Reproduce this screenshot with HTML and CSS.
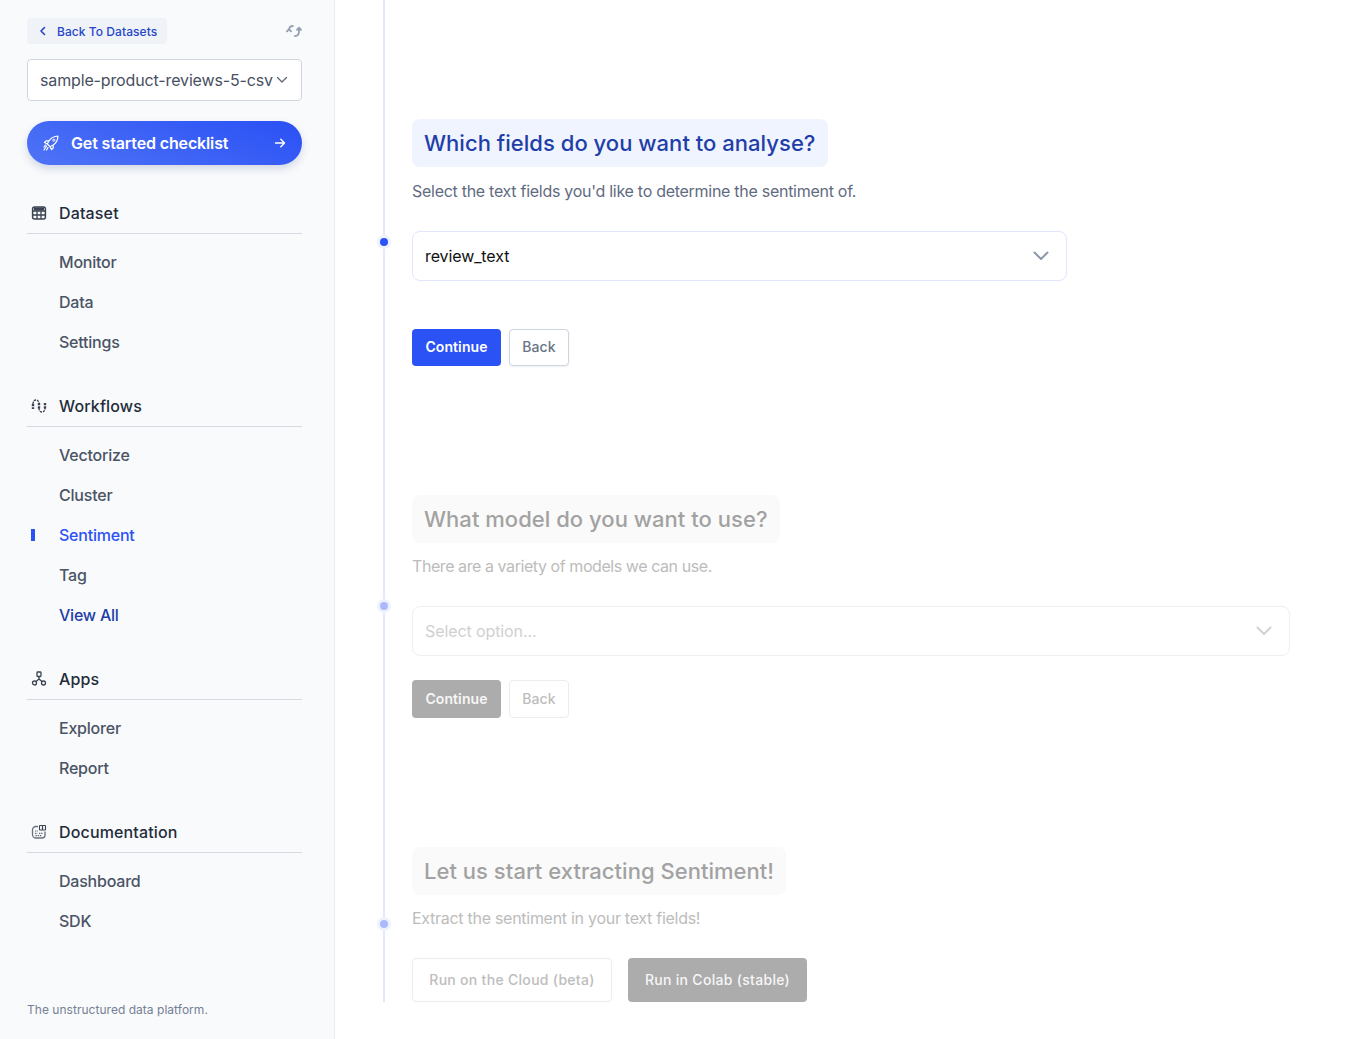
FILE: index.html
```html
<!DOCTYPE html>
<html lang="en">
<head>
<meta charset="utf-8">
<title>Sentiment</title>
<link rel="stylesheet" href="styles.css">
</head>
<body>
<div class="app">
  <aside class="sidebar">
    <div class="top-row">
      <a class="back-link">
        <svg class="back-icon" viewBox="0 0 12 12" fill="none"><path d="M7.500 2.500 4 6l3.500 3.500" stroke="currentColor" stroke-width="1.600" stroke-linecap="round" stroke-linejoin="round"/></svg>
        <span>Back To Datasets</span>
      </a>
      <svg class="sync-icon" viewBox="0 0 16 14" fill="none"><path d="M1 7.300 3 5.200l2 2.100M3 6c.2-2.400 1.600-4 3.800-4" stroke="currentColor" stroke-width="1.900" stroke-linecap="round" stroke-linejoin="round"/><path d="M15 5.800 13 3.700l-2 2.100M13 4.700v3c-.2 2.600-1.700 4.300-4 4.300" stroke="currentColor" stroke-width="1.900" stroke-linecap="round" stroke-linejoin="round"/></svg>
    </div>
    <div class="dataset-select">
      <span>sample-product-reviews-5-csv</span>
      <svg class="small-chevron" viewBox="0 0 12 8" fill="none"><path d="M1.500 1.500 6 6l4.500-4.500" stroke="currentColor" stroke-width="1.300" stroke-linecap="round" stroke-linejoin="round"/></svg>
    </div>
    <a class="checklist">
      <svg class="rocket" viewBox="0 0 16 16" fill="none"><path d="M15 1c-4 .2-7 1.700-9 4.800L4.300 9 7 11.700l3.200-1.700C13.300 8 14.800 5 15 1ZM6 5.800H3L1.500 7.500 4.300 9M10.200 10v3l-1.700 1.500L7 11.700M3.500 11 1 15M5 12.500 3.500 15M2.500 10 1 12" stroke="currentColor" stroke-width="1.200" stroke-linecap="round" stroke-linejoin="round"/><circle cx="10.800" cy="5.200" r="1.100" stroke="currentColor" stroke-width=".9"/></svg>
      <span class="checklist-label">Get started checklist</span>
      <svg class="arrow" viewBox="0 0 12 12" fill="none"><path d="M1.500 6h9M6.800 2.300 10.500 6l-3.700 3.700" stroke="currentColor" stroke-width="1.400" stroke-linecap="round" stroke-linejoin="round"/></svg>
    </a>

    <nav class="nav">
      <section class="nav-group">
        <h2 class="nav-head">
          <svg class="nav-icon" viewBox="0 0 16 16" fill="none"><rect x="1.600" y="2" width="12.800" height="12" rx="2" stroke="currentColor" stroke-width="1.500"/><path d="M1.800 6h12.400M1.800 10h12.400M6 6v8M10 6v8" stroke="currentColor" stroke-width="1.300"/><path d="M3 2.500h10v3H3z" fill="currentColor"/></svg>
          <span>Dataset</span>
        </h2>
        <ul class="nav-list">
          <li class="nav-item">Monitor</li>
          <li class="nav-item">Data</li>
          <li class="nav-item">Settings</li>
        </ul>
      </section>
      <section class="nav-group">
        <h2 class="nav-head">
          <svg class="nav-icon" viewBox="0 0 16 16" fill="none"><path d="M2 6C2 3.500 3.200 2 5 2s3 1.500 3 4" stroke="currentColor" stroke-width="1.300" stroke-dasharray="2.300 .9"/><path d="M8 10c0 2.500 1.200 4 3 4s3-1.500 3-4" stroke="currentColor" stroke-width="1.300" stroke-dasharray="2.300 .9"/><path d="M2 6v5M8 5v6M14 5v6" stroke="currentColor" stroke-width="2.400" stroke-dasharray="2.200 1.100"/></svg>
          <span>Workflows</span>
        </h2>
        <ul class="nav-list">
          <li class="nav-item">Vectorize</li>
          <li class="nav-item">Cluster</li>
          <li class="nav-item active">Sentiment</li>
          <li class="nav-item">Tag</li>
          <li class="nav-item view-all">View All</li>
        </ul>
      </section>
      <section class="nav-group">
        <h2 class="nav-head">
          <svg class="nav-icon" viewBox="0 0 16 16" fill="none"><rect x="6" y="1" width="4" height="4.500" rx=".8" stroke="currentColor" stroke-width="1.300"/><circle cx="3.500" cy="12" r="2" stroke="currentColor" stroke-width="1.300"/><circle cx="12.500" cy="12" r="2" stroke="currentColor" stroke-width="1.300"/><path d="M8 5.500v2.500M8 8 5 10.500M8 8l3 2.500" stroke="currentColor" stroke-width="1.300"/></svg>
          <span>Apps</span>
        </h2>
        <ul class="nav-list">
          <li class="nav-item">Explorer</li>
          <li class="nav-item">Report</li>
        </ul>
      </section>
      <section class="nav-group">
        <h2 class="nav-head">
          <svg class="nav-icon" viewBox="0 0 16 16" fill="none"><path d="M7 2.500H5a3.500 3.500 0 0 0-3.500 3.500v4.500A3.500 3.500 0 0 0 5 14h6a3 3 0 0 0 3-3V7.500" stroke="currentColor" stroke-width="1.300" opacity=".75"/><path d="M4 7h3M4 9.300h2.500M8 9.300h3.500M4.500 11.700h6.500" stroke="currentColor" stroke-width="1.200" stroke-dasharray="1.400 .8" opacity=".8"/><rect x="8.500" y="1.500" width="3" height="4.500" rx=".5" stroke="currentColor" stroke-width="1.100"/><rect x="11.500" y="1.500" width="3" height="4.500" rx=".5" stroke="currentColor" stroke-width="1.100"/></svg>
          <span>Documentation</span>
        </h2>
        <ul class="nav-list">
          <li class="nav-item">Dashboard</li>
          <li class="nav-item">SDK</li>
        </ul>
      </section>
    </nav>
    <p class="tagline">The unstructured data platform.</p>
  </aside>

  <main class="main">
    <div class="timeline">
      <span class="dot dot-one"></span>
      <span class="dot dot-two faded"></span>
      <span class="dot dot-three faded"></span>

      <section class="step step-one">
        <h1 class="step-title">Which fields do you want to analyse?</h1>
        <p class="step-desc">Select the text fields you'd like to determine the sentiment of.</p>
        <div class="field field-short">
          <span>review_text</span>
          <svg class="chevron" viewBox="0 0 16 10" fill="none"><path d="M1.500 1.500 8 8l6.500-6.500" stroke="currentColor" stroke-width="2" stroke-linecap="round" stroke-linejoin="round"/></svg>
        </div>
        <div class="actions actions-one">
          <button class="btn primary">Continue</button>
          <button class="btn secondary">Back</button>
        </div>
      </section>

      <section class="step step-two muted">
        <h1 class="step-title">What model do you want to use?</h1>
        <p class="step-desc">There are a variety of models we can use.</p>
        <div class="field">
          <span>Select option...</span>
          <svg class="chevron" viewBox="0 0 16 10" fill="none"><path d="M1.500 1.500 8 8l6.500-6.500" stroke="currentColor" stroke-width="2" stroke-linecap="round" stroke-linejoin="round"/></svg>
        </div>
        <div class="actions actions-two">
          <button class="btn primary tall">Continue</button>
          <button class="btn secondary tall">Back</button>
        </div>
      </section>

      <section class="step step-three muted">
        <h1 class="step-title">Let us start extracting Sentiment!</h1>
        <p class="step-desc">Extract the sentiment in your text fields!</p>
        <div class="actions actions-three">
          <button class="btn secondary large">Run on the Cloud (beta)</button>
          <button class="btn primary large">Run in Colab (stable)</button>
        </div>
      </section>
    </div>
  </main>
</div>
</body>
</html>
```

FILE: styles.css
```css
* { box-sizing: border-box; }
html, body { margin: 0; height: 100%; }
body { font-family: Inter, "Liberation Sans", sans-serif; background: #fff; color: #1f2937; overflow: hidden; }

.app { display: flex; height: 1039px; }

.sidebar {
  width: 335px;
  flex: none;
  display: flex;
  flex-direction: column;
  padding: 18px 32px 0 27px;
  background: #f9fafc;
  border-right: 1px solid #e8ebf0;
}

.top-row { display: flex; align-items: center; justify-content: space-between; }
.back-link {
  display: flex;
  align-items: center;
  gap: 8px;
  width: 140px;
  height: 26px;
  padding-left: 10px;
  border-radius: 4px;
  background: #eff2f7;
  color: #2447c9;
  font-size: 12px;
  font-weight: 500;
  letter-spacing: .06px;
  white-space: nowrap;
}
.back-icon { width: 12px; height: 12px; }
.sync-icon { width: 16px; height: 14px; color: #97a1b3; }

.dataset-select {
  display: flex;
  align-items: center;
  justify-content: space-between;
  height: 42px;
  margin-top: 15px;
  padding: 0 13px 0 12px;
  background: #fff;
  border: 1px solid #cfd5de;
  border-radius: 4px;
  color: #47505f;
  font-size: 16px;
  letter-spacing: -.14px;
  white-space: nowrap;
}
.small-chevron { width: 12px; height: 8px; color: #5d6676; flex: none; }

.checklist {
  display: flex;
  align-items: center;
  height: 44px;
  margin-top: 20px;
  padding: 0 16px;
  border-radius: 22px;
  background: linear-gradient(20deg, #4f74f6 0%, #2a50f5 100%);
  box-shadow: 0 4px 8px rgba(40, 60, 120, .18);
  color: #fff;
}
.rocket { width: 16px; height: 16px; flex: none; }
.checklist-label { margin-left: 12px; font-size: 16px; font-weight: 600; letter-spacing: -.14px; flex: 1; }
.arrow { width: 12px; height: 12px; }

.nav { display: flex; flex-direction: column; gap: 24px; margin-top: 28px; }
.nav-head {
  display: flex;
  align-items: center;
  gap: 12px;
  height: 41px;
  margin: 0;
  padding: 0 0 1px 4px;
  border-bottom: 1px solid #d5dae2;
  color: #242c3a;
  font-size: 16px;
  font-weight: 500;
  letter-spacing: .15px;
}
.nav-icon { width: 16px; height: 16px; flex: none; color: #3b4352; }
.nav-list { list-style: none; margin: 8px 0 0; padding: 0; }
.nav-item {
  position: relative;
  display: flex;
  align-items: center;
  height: 40px;
  padding-left: 32px;
  color: #4a5465;
  font-size: 16px;
  font-weight: 500;
  letter-spacing: -.22px;
}
.nav-item.active { color: #2b52f5; }
.nav-item.active::before {
  content: "";
  position: absolute;
  left: 4px;
  top: 14px;
  width: 4px;
  height: 12px;
  background: #2b52f5;
}
.nav-item.view-all { color: #1f3ea8; }

.tagline { margin: auto 0 20px; color: #748094; font-size: 12px; line-height: 18px; letter-spacing: .03px; }

.main { flex: 1; min-width: 0; padding-left: 48px; }
.timeline {
  position: relative;
  height: 1002px;
  padding-left: 27px;
  border-left: 2px solid #e2e8fd;
}
.dot {
  position: absolute;
  left: -8px;
  width: 14px;
  height: 14px;
  border-radius: 50%;
  background: #2b52f5;
  border: 3px solid #eef1fe;
}
.dot.faded { background: #aabafa; }
.dot-one { top: 235px; }
.dot-two { top: 599px; }
.dot-three { top: 917px; }

.step-one { padding-top: 119px; }
.step-two { padding-top: 129px; }
.step-three { padding-top: 129px; }

.step-title {
  width: fit-content;
  height: 48px;
  margin: 0;
  padding: 1px 12px 0;
  border-radius: 8px;
  background: #eff4fe;
  color: #1f3ea8;
  font-size: 22px;
  font-weight: 500;
  line-height: 47px;
  letter-spacing: .03px;
  white-space: nowrap;
}
.step-desc { margin: 14px 0 0; height: 21px; color: #5f6b7f; font-size: 16px; line-height: 21px; letter-spacing: -.28px; }
.muted .step-desc { margin-top: 13px; }
.step-two .step-desc { letter-spacing: -.43px; }

.field {
  display: flex;
  align-items: center;
  justify-content: space-between;
  width: 878px;
  height: 50px;
  margin-top: 29px;
  padding: 0 17px 0 12px;
  background: #fff;
  border: 1px solid #e0e5fb;
  border-radius: 8px;
  color: #111;
  font-size: 16px;
  letter-spacing: -.1px;
}
.field-short { width: 655px; }
.chevron { width: 16px; height: 10px; color: #8e97a7; }

.actions { display: flex; }
.actions-one { margin-top: 48px; gap: 8px; }
.actions-two { margin-top: 24px; gap: 8px; }
.actions-three { margin-top: 29px; gap: 16px; }

.btn {
  height: 37px;
  padding: 0 0 2px;
  border-radius: 4px;
  font-family: inherit;
  font-size: 14px;
  letter-spacing: .1px;
  cursor: pointer;
}
.btn.tall { height: 38px; }
.btn.primary { width: 89px; border: 0; background: #2b52f5; color: #fff; font-weight: 600; }
.btn.secondary { width: 60px; border: 1px solid #cfd5de; background: #fff; color: #687386; font-weight: 500; box-shadow: 0 1px 2px rgba(40, 50, 70, .08); }
.btn.primary.large { width: 179px; height: 44px; font-weight: 500; letter-spacing: .3px; }
.btn.secondary.large { width: 200px; height: 44px; letter-spacing: .3px; }

.muted .step-title { background: #fafafa; color: #a2a2a2; }
.muted .step-desc { color: #bcbcbc; }
.muted .field { border-color: #efefef; color: #d0d0d0; }
.muted .chevron { color: #d2d2d2; }
.muted .btn.primary { background: #acacac; color: #f6f6f6; }
.muted .btn.secondary { border-color: #ececec; color: #bdbdbd; box-shadow: none; }
```
